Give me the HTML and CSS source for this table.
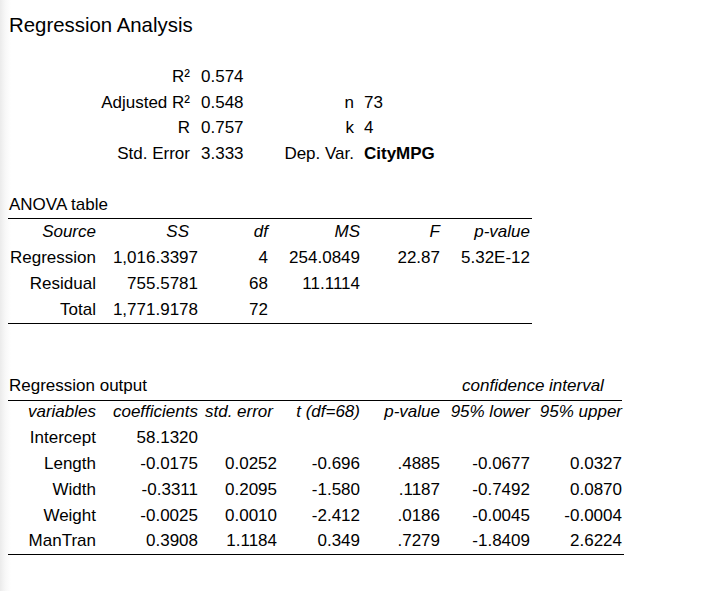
FILE: index.html
```html
<!DOCTYPE html>
<html>
<head>
<meta charset="utf-8">
<title>Regression Analysis</title>
<link rel="stylesheet" href="styles.css">
</head>
<body>
<div class="page">
  <h1 class="title">Regression Analysis</h1>

  <div class="summary">
    <div class="lbl">R²</div><div class="val">0.574</div><div class="lbl2"></div><div class="val2"></div>
    <div class="lbl">Adjusted R²</div><div class="val">0.548</div><div class="lbl2">n</div><div class="val2">73</div>
    <div class="lbl">R</div><div class="val">0.757</div><div class="lbl2">k</div><div class="val2">4</div>
    <div class="lbl">Std. Error</div><div class="val">3.333</div><div class="lbl2">Dep. Var.</div><div class="val2 bold">CityMPG</div>
  </div>

  <div class="anova">
    <div class="caption anova-caption">ANOVA table</div>
    <div class="grid anova-grid">
      <div class="h">Source</div><div class="h ss-h">SS</div><div class="h">df</div><div class="h">MS</div><div class="h">F</div><div class="h">p-value</div>
      <div>Regression</div><div>1,016.3397</div><div>4</div><div>254.0849</div><div>22.87</div><div>5.32E-12</div>
      <div>Residual</div><div>755.5781</div><div>68</div><div>11.1114</div><div></div><div></div>
      <div>Total</div><div>1,771.9178</div><div>72</div><div></div><div></div><div></div>
    </div>
  </div>

  <div class="regout">
    <div class="grid reg-grid">
      <div class="caption-row">
        <div class="caption">Regression output</div>
        <div class="ci">confidence interval</div>
      </div>
      <div class="h">variables</div><div class="h">coefficients</div><div class="h se-h">std. error</div><div class="h">t (df=68)</div><div class="h">p-value</div><div class="h">95% lower</div><div class="h">95% upper</div>
      <div>Intercept</div><div>58.1320</div><div></div><div></div><div></div><div></div><div></div>
      <div>Length</div><div>-0.0175</div><div>0.0252</div><div>-0.696</div><div>.4885</div><div>-0.0677</div><div>0.0327</div>
      <div>Width</div><div>-0.3311</div><div>0.2095</div><div>-1.580</div><div>.1187</div><div>-0.7492</div><div>0.0870</div>
      <div>Weight</div><div>-0.0025</div><div>0.0010</div><div>-2.412</div><div>.0186</div><div>-0.0045</div><div>-0.0004</div>
      <div>ManTran</div><div>0.3908</div><div>1.1184</div><div>0.349</div><div>.7279</div><div>-1.8409</div><div>2.6224</div>
    </div>
  </div>
</div>
</body>
</html>
```

FILE: styles.css
```css
html {
  background: linear-gradient(to right, #ebebeb 0px, #f7f7f7 5px, #ffffff 11px);
  min-height: 100%;
}
body {
  margin: 0;
  font-family: "Liberation Sans", Arial, sans-serif;
  font-size: 17px;
  color: #000;
}
.page {
  padding: 13px 0 0 8px;
}
.title {
  margin: 0;
  font-size: 20.4px;
  font-weight: normal;
  line-height: 24px;
  padding-left: 1px;
}
.summary {
  margin-top: 27px;
  display: grid;
  grid-template-columns: 182px 64px 100px auto;
  grid-auto-rows: 25.7px;
  align-items: center;
}
.summary .lbl, .summary .lbl2 {
  text-align: right;
}
.summary .val {
  padding-left: 11px;
}
.summary .val2 {
  padding-left: 10px;
}
.bold {
  font-weight: bold;
}
.anova {
  margin-top: 25px;
  width: 524px;
}
.caption {
  line-height: 26px;
  padding-left: 1px;
}
.anova-caption {
  border-bottom: 1px solid #000;
}
.grid {
  display: grid;
  border-bottom: 1px solid #000;
}
.grid > div {
  text-align: right;
  white-space: nowrap;
}
.anova-grid {
  grid-template-columns: 88px 102px 70px 92px 80px 90px 2px;
  grid-auto-rows: 26px;
  align-items: center;
}
.anova-grid > div:nth-child(6n) {
  grid-column-end: span 2;
  padding-right: 2px;
}
.h {
  font-style: italic;
}
.ss-h {
  padding-right: 9px;
}
.se-h {
  padding-right: 4px;
}
.regout {
  margin-top: 50px;
  width: 616px;
}
.reg-grid {
  grid-template-columns: 88px 102px 79px 83px 80px 90px 92px;
  grid-auto-rows: 25.8px;
  align-items: center;
}
.reg-grid > .caption-row {
  grid-column: 1 / -1;
  display: grid;
  grid-template-columns: 432px 182px;
  border-bottom: 1px solid #000;
  height: 27px;
  align-items: center;
  text-align: left;
}
.ci {
  font-style: italic;
  text-align: center;
  line-height: 26px;
  padding-left: 4px;
}
```
